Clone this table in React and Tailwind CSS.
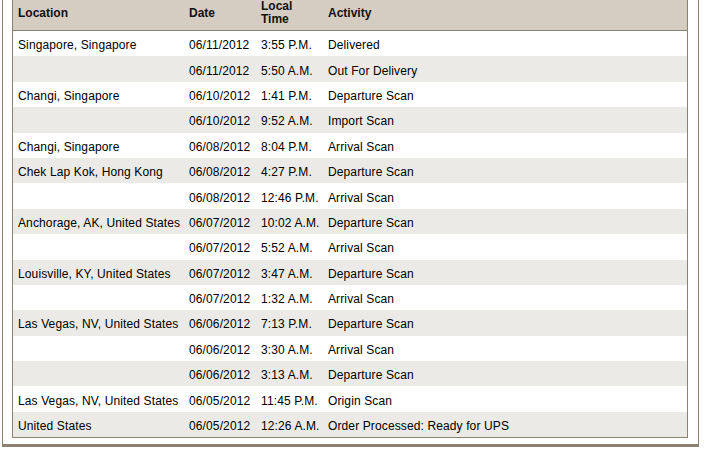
const rows = [
  ["Singapore, Singapore", "06/11/2012", "3:55 P.M.", "Delivered"],
  ["", "06/11/2012", "5:50 A.M.", "Out For Delivery"],
  ["Changi, Singapore", "06/10/2012", "1:41 P.M.", "Departure Scan"],
  ["", "06/10/2012", "9:52 A.M.", "Import Scan"],
  ["Changi, Singapore", "06/08/2012", "8:04 P.M.", "Arrival Scan"],
  ["Chek Lap Kok, Hong Kong", "06/08/2012", "4:27 P.M.", "Departure Scan"],
  ["", "06/08/2012", "12:46 P.M.", "Arrival Scan"],
  ["Anchorage, AK, United States", "06/07/2012", "10:02 A.M.", "Departure Scan"],
  ["", "06/07/2012", "5:52 A.M.", "Arrival Scan"],
  ["Louisville, KY, United States", "06/07/2012", "3:47 A.M.", "Departure Scan"],
  ["", "06/07/2012", "1:32 A.M.", "Arrival Scan"],
  ["Las Vegas, NV, United States", "06/06/2012", "7:13 P.M.", "Departure Scan"],
  ["", "06/06/2012", "3:30 A.M.", "Arrival Scan"],
  ["", "06/06/2012", "3:13 A.M.", "Departure Scan"],
  ["Las Vegas, NV, United States", "06/05/2012", "11:45 P.M.", "Origin Scan"],
  ["United States", "06/05/2012", "12:26 A.M.", "Order Processed: Ready for UPS"],
];

const cols = "grid grid-cols-[171px_72px_67px_1fr]";

export default function App() {
  return (
    <div
      className="w-[707px] h-[449px] overflow-hidden bg-white text-[12px] text-black"
      style={{ fontFamily: '"Liberation Sans", Arial, sans-serif' }}
    >
      <div className="ml-[2px] w-[697px] border-x border-b-[3px] border-[#8b8272] pl-[9px] pr-[10px] pb-[6px]">
        <div className="border-x border-b border-[#8b8272]">
          {/* header */}
          <div className={`${cols} h-[31px] bg-[#d5cdc1] border-b border-[#8b8272] pb-[8px] font-bold text-[#111]`}>
            <div className="flex items-center px-[5px]">Location</div>
            <div className="flex items-center px-[5px]">Date</div>
            <div className="flex items-center px-[5px] leading-[13px]">
              Local
              <br />
              Time
            </div>
            <div className="flex items-center px-[5px]">Activity</div>
          </div>

          {rows.map((r, i) => (
            <div
              key={i}
              className={`${cols} h-[25.4px] pt-[3px] items-center tracking-[0.12px] ${i % 2 ? "bg-[#ebeae6]" : "bg-white"}`}
            >
              {r.map((c, j) => (
                <div key={j} className="px-[5px] whitespace-nowrap">
                  {c}
                </div>
              ))}
            </div>
          ))}
        </div>
      </div>
    </div>
  );
}
